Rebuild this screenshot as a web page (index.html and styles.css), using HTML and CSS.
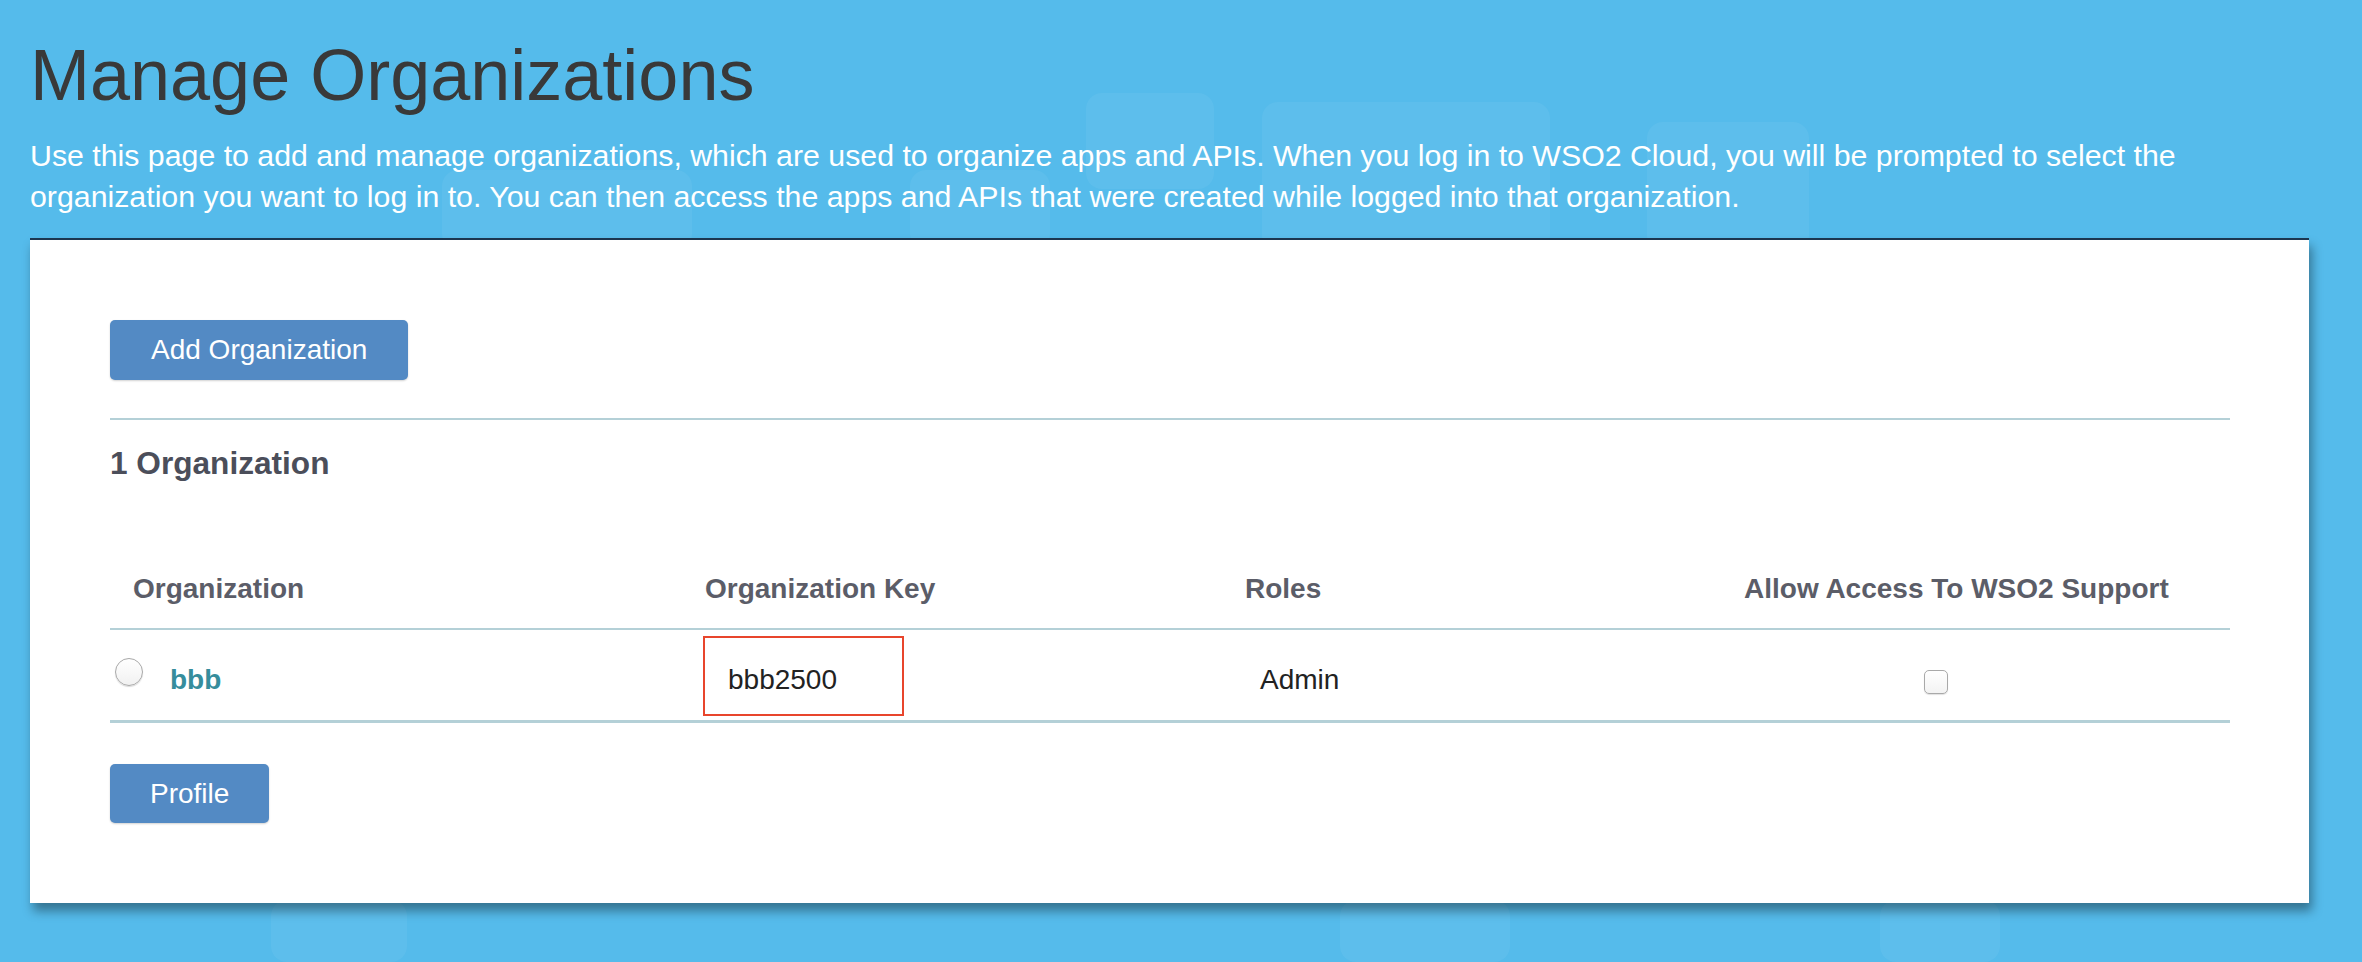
FILE: index.html
```html
<!DOCTYPE html>
<html lang="en">
<head>
<meta charset="utf-8">
<title>Manage Organizations</title>
<link rel="stylesheet" href="styles.css">
</head>
<body>
<div class="backdrop" aria-hidden="true">
  <span class="deco d1"></span>
  <span class="deco d2"></span>
  <span class="deco d3"></span>
  <span class="deco d4"></span>
  <span class="deco d5"></span>
  <span class="deco d6"></span>
  <span class="deco d7"></span>
  <span class="deco d8"></span>
</div>
<main class="page">
  <h1 class="title">Manage Organizations</h1>
  <p class="intro">Use this page to add and manage organizations, which are used to organize apps and APIs. When you log in to WSO2 Cloud, you will be prompted to select the organization you want to log in to. You can then access the apps and APIs that were created while logged into that organization.</p>
  <section class="card">
    <button class="btn" type="button">Add Organization</button>
    <hr class="divider">
    <h2 class="count">1 Organization</h2>
    <table class="orgs">
      <colgroup>
        <col class="c1"><col class="c2"><col class="c3"><col class="c4">
      </colgroup>
      <thead>
        <tr>
          <th>Organization</th>
          <th>Organization Key</th>
          <th>Roles</th>
          <th>Allow Access To WSO2 Support</th>
        </tr>
      </thead>
      <tbody>
        <tr>
          <td class="org-cell"><input class="radio" type="radio" name="org"><a class="org-name">bbb</a></td>
          <td class="key-cell"><div class="key-box">bbb2500</div></td>
          <td><span class="role">Admin</span></td>
          <td><input class="check" type="checkbox"></td>
        </tr>
      </tbody>
    </table>
    <button class="btn btn-profile" type="button">Profile</button>
  </section>
</main>
</body>
</html>
```

FILE: styles.css
```css
html, body {
  margin: 0;
  padding: 0;
}
body {
  background: #55bbeb;
  font-family: "Liberation Sans", Arial, Helvetica, sans-serif;
  width: 2362px;
  height: 962px;
  overflow: hidden;
  position: relative;
}

.backdrop {
  position: absolute;
  inset: 0;
  z-index: 0;
  pointer-events: none;
}
.deco {
  position: absolute;
  background: rgba(255, 255, 255, 0.05);
  border-radius: 16px;
}
.d1 { left: 1086px; top: 93px; width: 128px; height: 96px; }
.d2 { left: 1262px; top: 102px; width: 288px; height: 150px; }
.d3 { left: 1647px; top: 122px; width: 162px; height: 130px; }
.d4 { left: 910px; top: 170px; width: 140px; height: 80px; }
.d5 { left: 442px; top: 170px; width: 250px; height: 80px; }
.d6 { left: 271px; top: 900px; width: 136px; height: 62px; }
.d7 { left: 1340px; top: 900px; width: 170px; height: 62px; }
.d8 { left: 1880px; top: 900px; width: 120px; height: 62px; }

.page {
  position: relative;
  z-index: 1;
  padding: 35px 53px 0 30px;
}

.title {
  margin: 0;
  font-size: 72px;
  line-height: 80px;
  font-weight: normal;
  color: #393939;
}

.intro {
  margin: 20px 0 0;
  font-size: 30.3px;
  line-height: 41px;
  color: #ffffff;
}

.card {
  margin-top: 21px;
  background: #ffffff;
  border-top: 2px solid #1c3650;
  padding: 80px 79px 80px 80px;
  box-shadow: 3px 8px 10px rgba(0, 0, 0, 0.38);
}

.btn {
  display: block;
  font-family: inherit;
  font-size: 28px;
  line-height: 40px;
  padding: 10px 41px;
  color: #ffffff;
  background: #538ac4;
  border: none;
  border-radius: 5px;
  box-shadow: 0 1px 2px rgba(0, 0, 0, 0.18);
}

.divider {
  margin: 38px 0 0;
  border: none;
  height: 2px;
  background: #b4d0d7;
}

.count {
  margin: 26px 0 0;
  font-size: 31.6px;
  line-height: 34px;
  font-weight: bold;
  color: #4b4e5a;
}

.orgs {
  margin-top: 73px;
  width: 2120px;
  border-collapse: collapse;
  table-layout: fixed;
}
.c1 { width: 572px; }
.c2 { width: 540px; }
.c3 { width: 499px; }
.c4 { width: 509px; }

.orgs th {
  text-align: left;
  font-size: 28px;
  line-height: 40px;
  font-weight: bold;
  color: #5b5d68;
  padding: 16px 23px 19px;
  border-bottom: 2px solid #b4d0d7;
}

.orgs td {
  vertical-align: top;
  font-size: 28px;
  line-height: 40px;
  color: #222222;
  padding: 30px 23px 0;
  border-bottom: 3px solid #b4d0d7;
}

.orgs td.org-cell {
  padding-left: 5px;
}
.org-cell {
  white-space: nowrap;
}
.radio {
  appearance: none;
  -webkit-appearance: none;
  display: inline-block;
  vertical-align: top;
  width: 28px;
  height: 28px;
  margin: -2px 27px 0 0;
  border: 1px solid #a9a9a9;
  border-radius: 50%;
  background: linear-gradient(#ffffff, #f1f1f1);
  box-shadow: 0 1px 1px rgba(0, 0, 0, 0.15);
}
.org-name {
  font-weight: bold;
  color: #368d9c;
  text-decoration: none;
}

.orgs td.key-cell {
  padding: 6px 23px 4px 21px;
}
.key-box {
  box-sizing: border-box;
  width: 201px;
  height: 80px;
  border: 2px solid #e8452c;
  padding: 22px 10px 0 23px;
}

.role {
  padding-left: 15px;
}

.check {
  appearance: none;
  -webkit-appearance: none;
  display: block;
  width: 24px;
  height: 24px;
  margin: 10px 0 0 180px;
  border: 1px solid #a9a9a9;
  border-radius: 5px;
  background: linear-gradient(#ffffff, #f3f3f3);
  box-shadow: 0 1px 1px rgba(0, 0, 0, 0.12);
}

.btn-profile {
  margin-top: 41px;
  padding: 10px 40px 9px;
}
```
